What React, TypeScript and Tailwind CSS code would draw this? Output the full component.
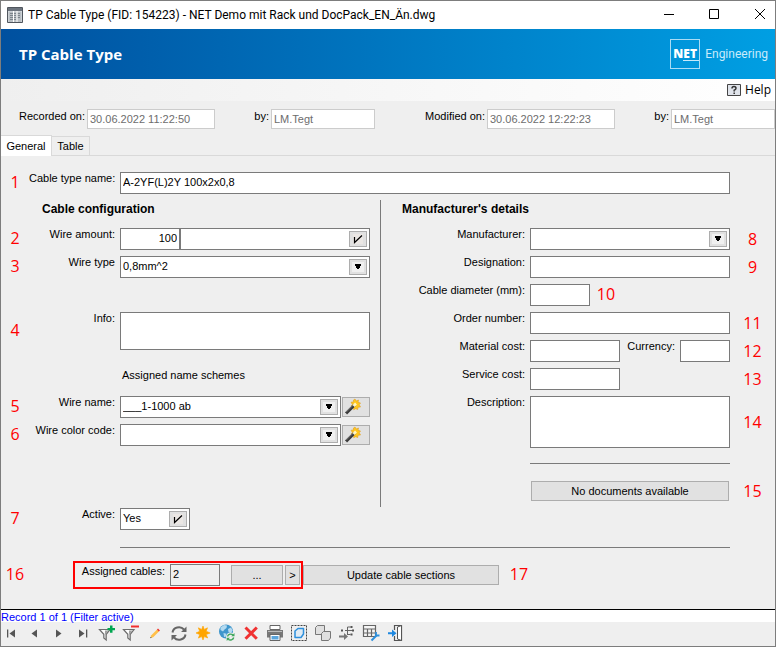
import React, { useState } from "react";

const fieldBox = "border border-[#7a7a7a] bg-white";
const fieldText = "px-0.5 pb-0.5 text-[11px] leading-4 outline-none";
const greyButton = "border border-[#adadad] bg-[#e1e1e1] text-[11px] text-black hover:bg-[#e5f1fb]";

type NumProps = { n: number; side?: "left" | "right" };

function Num({ n, side = "left" }: NumProps) {
  return (
    <span
      className={
        side === "left"
          ? "w-7 shrink-0 self-center pb-0.5 text-center text-base leading-5 text-[#ff0000] font-['Open_Sans',sans-serif]"
          : "w-[45px] shrink-0 self-center text-center text-base leading-5 text-[#ff0000] font-['Open_Sans',sans-serif]"
      }
    >
      {n}
    </span>
  );
}

// label on the left half, ends right before the field
function LeftLabel({ id, children }: { id: string; children: React.ReactNode }) {
  return (
    <label htmlFor={id} className="mr-[5px] w-[86px] shrink-0 text-right leading-3 whitespace-nowrap">
      {children}
    </label>
  );
}

function RightLabel({ id, children }: { id: string; children: React.ReactNode }) {
  return (
    <label htmlFor={id} className="mr-[5px] w-36 shrink-0 text-right leading-3 whitespace-nowrap">
      {children}
    </label>
  );
}

function ArrowSelect({ id, value }: { id: string; value: string }) {
  return (
    <div className="relative min-w-0 flex-1">
      <select id={id} defaultValue={value} className={`h-[22px] w-full appearance-none ${fieldBox} ${fieldText}`}>
        <option>{value}</option>
      </select>
      <span className="pointer-events-none absolute top-[3px] right-[3px] flex h-4 w-[18px] items-center justify-center border border-[#adadad] bg-[#e1e1e1]">
        <svg width="12" height="10" viewBox="0 0 12 10" shapeRendering="crispEdges">
          <path d="M0 0h12v10H0z" fill="#f0f0f0" />
          <path d="M3 2h6v2H8v2H7v1H5V6H4V4H3z" fill="#000" />
        </svg>
      </span>
    </div>
  );
}

function TickButton({ label }: { label: string }) {
  return (
    <button type="button" aria-label={label} className={`mr-0.5 flex h-4 w-[18px] shrink-0 items-center justify-center ${greyButton}`}>
      <svg width="10" height="10" viewBox="0 0 10 10">
        <path d="M0 0h10v10H0z" fill="#ebe7e4" />
        <path d="M1.5 3v5.5L9 1.500" fill="none" stroke="#000" strokeWidth="1.200" />
      </svg>
    </button>
  );
}

function WandButton({ label }: { label: string }) {
  return (
    <button type="button" aria-label={label} className={`ml-px h-5 w-7 shrink-0 self-center ${greyButton}`}>
      <svg width="20" height="18" viewBox="0 0 20 18">
        <path
          d="M12 1l1.2 2L15.500 2l-.5 2.300L17.500 5l-1.300 1.700L17.500 9l-2.500.2-.3 2.300-2-.8-2 1-.2-2.200L8 8l1.400-1.600L8 4.200l2.300-.1L10.500 2z"
          fill="#ffc61e"
          stroke="#e0a020"
          strokeWidth=".6"
        />
        <path d="M3 15.500L11.500 7" stroke="#3a3a3a" strokeWidth="3" />
        <path d="M3 14.300L10.500 6.800" stroke="#8a8a8a" strokeWidth=".8" />
        <path d="M10.500 8L13 5.500" stroke="#fff6c8" strokeWidth="2.600" />
        <path d="M2 16.500l1-1" stroke="#ddd" strokeWidth="1.500" />
      </svg>
    </button>
  );
}

const funnel = (
  <>
    <path d="M2.500 7.500H13L9.200 12.300V18L6.800 16V12.300z" fill="#fff" stroke="#6d6d6d" strokeWidth="1.200" />
    <path d="M8 8.500h3.500L8.500 12.500v4l-.8-.6z" fill="#a0a0a0" />
  </>
);

const toolbar: { name: string; icon: React.ReactNode }[] = [
  { name: "First record", icon: <path d="M6 7.500h1.300v8H6zM14 7.500v8l-5.500-4z" fill="#555" /> },
  { name: "Previous record", icon: <path d="M12 7.500v8l-5.500-4z" fill="#555" /> },
  { name: "Next record", icon: <path d="M7 7.500v8l5.500-4z" fill="#555" /> },
  { name: "Last record", icon: <path d="M6 7.500v8l5.500-4zM13 7.500h1.300v8H13z" fill="#555" /> },
  {
    name: "Set filter",
    icon: (
      <>
        {funnel}
        <path d="M13 3.500h2.500V6H18v2.300h-2.500v2.500H13V8.300h-2.500V6H13z" fill="#00a651" />
      </>
    ),
  },
  {
    name: "Remove filter",
    icon: (
      <>
        {funnel}
        <path d="M10 3.500h8v2h-8z" fill="#f03030" />
      </>
    ),
  },
  {
    name: "Edit",
    icon: (
      <>
        <path d="M5.500 16l.8-2.700 6-6 1.900 1.900-6 6z" fill="#ffc04a" />
        <path d="M12 7.500l1-1 1.900 1.900-1 1z" fill="#f03030" />
        <path d="M5.200 16.300l.5-1.500 1 1z" fill="#444" />
      </>
    ),
  },
  {
    name: "Refresh",
    icon: (
      <>
        <path d="M3.500 10.500a6.500 6 0 0 1 11.500-3M16.500 12.500a6.500 6 0 0 1-11.500 3" fill="none" stroke="#666" strokeWidth="2" />
        <path d="M17.500 4.500v5.500h-5.500zM2.500 18.500V13H8z" fill="#666" />
      </>
    ),
  },
  {
    name: "New",
    icon: (
      <path
        d="M10 4l1.200 3.400L14.500 5.800l-1.300 3.400 4 1.800-4 1.500 1.500 3.500-3.500-1.400L10 18l-1.300-3.400-3.300 1.500 1.300-3.500L3 11l3.700-1.700-1.400-3.500 3.400 1.600z"
        fill="#ffa500"
        stroke="#ffa500"
        strokeWidth=".6"
      />
    ),
  },
  {
    name: "Update online",
    icon: (
      <>
        <circle cx="9" cy="9.500" r="7" fill="#3f96cc" />
        <path d="M3.500 5.500L7 3l3 .5L9.500 6 7.500 7.500 6 9.500 3.500 8zM11 7l3-1.500 1.700 3L14 11l-2.500-1zM6.500 11l3 .8-.8 3L7 15z" fill="#b4daf0" />
        <circle cx="13.500" cy="15" r="4.500" fill="#efefef" />
        <path d="M10.500 14.500a3.300 3 0 0 1 5.500-1.500M16.700 15.500a3.300 3 0 0 1-5.500 1.700" fill="none" stroke="#3fa75c" strokeWidth="1.400" />
        <path d="M17.500 11v3.300h-3.300zM9.700 19v-3.300H13z" fill="#3fa75c" />
      </>
    ),
  },
  { name: "Delete", icon: <path d="M4.500 5.500l11.300 11.300M15.800 5.500L4.500 16.800" stroke="#f03232" strokeWidth="3" /> },
  {
    name: "Print",
    icon: (
      <>
        <path d="M5 3.500h10v4H5z" fill="#fff" stroke="#666" />
        <path d="M2 8h16v7.500h-3v-3H5v3H2z" fill="#777" />
        <path d="M5 12.500h10v6H5z" fill="#fff" stroke="#666" />
        <path d="M6.500 14h7v3.500h-7z" fill="#5aa5dc" />
        <path d="M3 9.500h14" stroke="#bbb" />
      </>
    ),
  },
  {
    name: "Select object",
    icon: (
      <>
        <path d="M2.500 3.500h15v15h-15z" fill="none" stroke="#444" strokeDasharray="2 1" />
        <path d="M6 9l3-2.500h5.500V12L12 15.500H6z" fill="#dfeaf3" stroke="#2d8fdc" strokeWidth="1.500" strokeLinejoin="round" />
      </>
    ),
  },
  {
    name: "Copy",
    icon: (
      <>
        <path d="M2.500 5.500l2-2h7v6l-2 3h-7z" fill="#e0e0e0" stroke="#777" strokeLinejoin="round" />
        <path d="M8.500 11.500l2-2h7v6.500l-2 2.500h-7z" fill="#e0e0e0" stroke="#777" strokeLinejoin="round" />
      </>
    ),
  },
  {
    name: "Assign",
    icon: (
      <>
        <path d="M2 13.500h5V11l4 3.500-4 3.500v-2.500H2z" fill="#777" />
        <path d="M10.500 5v8M8 8.500h8M10.500 5h3M10.500 12.500h3" fill="none" stroke="#666" />
        <path d="M4 7.500h2v2H4zM13.500 4h2v2h-2zM15 7.500h2v2h-2zM13.500 11.500h2v2h-2z" fill="#555" />
      </>
    ),
  },
  {
    name: "Table settings",
    icon: (
      <>
        <path d="M2.500 3.500h12v11h-12zM2.500 7h12M2.500 11h12M6.500 7v7.500M10.500 7v7.500" fill="#f6f6f6" stroke="#666" strokeWidth="1.200" />
        <path d="M10.500 18.500l5-5" stroke="#2d8fdc" strokeWidth="2" />
        <path d="M15 10v3.500h3.500" fill="none" stroke="#2d8fdc" strokeWidth="1.800" />
      </>
    ),
  },
  {
    name: "Close form",
    icon: (
      <>
        <path d="M9.500 8V3.500h7v15h-7V14" fill="none" stroke="#555" strokeWidth="1.200" />
        <path d="M12.500 5l4-1.500v15l-4-1.500z" fill="#fff" stroke="#555" />
        <path d="M3 10.200h4V7.500l4.500 3.700L7 15v-2.700H3z" fill="#1e88e0" />
      </>
    ),
  },
];

function TitleBar() {
  return (
    <div className="flex h-7 items-center bg-white pl-[5px]">
      <svg width="18" height="18" viewBox="0 0 18 18" className="shrink-0">
        <path d="M1.500 1.500h15v15h-15z" fill="#dfe3e6" stroke="#50565e" />
        <path d="M2 2h14v3H2z" fill="#6c747e" />
        <path d="M2.500 5.500h13v10.500h-13z" fill="#b9bfc4" />
        <path d="M4 7.500h3M4 9.500h3M4 11.500h3M4 13.500h3M8 7.500h2M8 9.500h2M8 11.500h2M8 13.500h2M11.500 7.500H14M11.500 9.500H14M11.500 11.500H14" stroke="#7d858c" />
        <path d="M7.500 5v11M11 5v11" stroke="#fff" />
      </svg>
      <span className="ml-1 min-w-0 flex-1 truncate text-xs text-black font-[Roboto,sans-serif]">
        TP Cable Type (FID: 154223) - NET Demo mit Rack und DocPack_EN_Än.dwg
      </span>
      <div className="flex shrink-0">
        <button type="button" aria-label="Minimize" className="flex h-7 w-[45px] items-center justify-center">
          <svg width="12" height="12" viewBox="0 0 12 12">
            <path d="M1 5.500h10" stroke="#000" />
          </svg>
        </button>
        <button type="button" aria-label="Maximize" className="flex h-7 w-[45px] items-center justify-center">
          <svg width="12" height="12" viewBox="0 0 12 12">
            <path d="M1.500.5h9v9h-9z" fill="none" stroke="#000" />
          </svg>
        </button>
        <button type="button" aria-label="Close" className="flex h-7 w-[39px] items-center justify-center pl-2">
          <svg width="12" height="12" viewBox="0 0 12 12">
            <path d="M1 0l10 10M11 0L1 10" stroke="#000" />
          </svg>
        </button>
      </div>
    </div>
  );
}

function Banner() {
  return (
    <header className="flex h-[50px] items-center justify-between bg-linear-to-r from-[#00509f] to-[#009fe3] pr-[7px] pl-[18px] text-white">
      <h1 className="text-[15px] font-bold font-['Open_Sans',sans-serif]">TP Cable Type</h1>
      <div className="flex items-center gap-[5px]">
        <div className="h-[30px] w-[30px] border border-[#a9dcf5] pt-2 text-center font-['Open_Sans',sans-serif]">
          <div className="text-xs leading-3 font-extrabold">NET</div>
          <div className="ml-3 h-px bg-[#c9e9fa]" />
        </div>
        <span className="text-xs text-[#c9ebfb] font-[Roboto,sans-serif]">Engineering</span>
      </div>
    </header>
  );
}

const stamps = [
  { id: "recorded", label: "Recorded on:", date: "30.06.2022 11:22:50" },
  { id: "modified", label: "Modified on:", date: "30.06.2022 12:22:23" },
];

function Stamps() {
  const box = "h-5 min-w-0 border border-[#cccccc] bg-white px-0.5 text-[#6d6d6d] outline-none";
  return (
    <div className="grid grid-cols-[minmax(0,200fr)_minmax(0,187fr)] pt-2">
      {stamps.map((s) => (
        <div key={s.id} className="flex gap-0.5 first:pr-[26px]">
          <label htmlFor={s.id} className="w-[84px] shrink-0 text-right leading-3.5 whitespace-nowrap">
            {s.label}
          </label>
          <input id={s.id} readOnly value={s.date} className={`w-32 ${box}`} />
          <label htmlFor={`${s.id}-by`} className="w-[52px] shrink-0 text-right leading-3.5">
            by:
          </label>
          <input id={`${s.id}-by`} readOnly value="LM.Tegt" className={`flex-1 ${box}`} />
        </div>
      ))}
    </div>
  );
}

function CableConfiguration() {
  return (
    <section className="flex flex-col border-r border-[#7a7a7a] pr-2.5">
      <h2 className="h-7 pt-[3px] pl-[41px] text-xs leading-3 font-bold">Cable configuration</h2>
      <div className="flex flex-col gap-1.5">
        <div className="flex">
          <Num n={2} />
          <LeftLabel id="amount">Wire amount:</LeftLabel>
          <input id="amount" defaultValue="100" className={`h-[22px] w-[60px] text-right ${fieldBox} ${fieldText}`} />
          <div className={`flex h-[22px] min-w-0 flex-1 items-center ${fieldBox}`}>
            <input aria-label="Wire amount note" className={`min-w-0 flex-1 ${fieldText}`} />
            <TickButton label="Confirm wire amount" />
          </div>
        </div>
        <div className="flex">
          <Num n={3} />
          <LeftLabel id="wiretype">Wire type</LeftLabel>
          <ArrowSelect id="wiretype" value="0,8mm^2" />
        </div>
      </div>
      <div className="flex pt-[34px]">
        <Num n={4} />
        <LeftLabel id="info">Info:</LeftLabel>
        <textarea id="info" className={`h-[38px] min-w-0 flex-1 resize-none ${fieldBox} ${fieldText}`} />
      </div>
      <h3 className="h-[46px] pt-[17px] pl-[121px] leading-4">Assigned name schemes</h3>
      <div className="flex flex-col gap-1.5">
        <div className="flex">
          <Num n={5} />
          <LeftLabel id="wirename">Wire name:</LeftLabel>
          <ArrowSelect id="wirename" value="___1-1000 ab" />
          <WandButton label="Wire name wizard" />
        </div>
        <div className="flex">
          <Num n={6} />
          <LeftLabel id="wirecolor">Wire color code:</LeftLabel>
          <ArrowSelect id="wirecolor" value="" />
          <WandButton label="Wire color wizard" />
        </div>
      </div>
    </section>
  );
}

function ManufacturerDetails() {
  return (
    <section className="flex flex-col">
      <h2 className="h-7 pt-[3px] pl-[21px] text-xs leading-3 font-bold">Manufacturer's details</h2>
      <div className="flex flex-col gap-1.5">
        <div className="flex">
          <RightLabel id="manufacturer">Manufacturer:</RightLabel>
          <ArrowSelect id="manufacturer" value="" />
          <Num n={8} side="right" />
        </div>
        <div className="flex">
          <RightLabel id="designation">Designation:</RightLabel>
          <input id="designation" className={`h-[22px] min-w-0 flex-1 ${fieldBox} ${fieldText}`} />
          <Num n={9} side="right" />
        </div>
        <div className="flex">
          <RightLabel id="diameter">Cable diameter (mm):</RightLabel>
          <input id="diameter" className={`mr-0.5 h-[22px] w-[60px] ${fieldBox} ${fieldText}`} />
          <Num n={10} />
        </div>
        <div className="flex">
          <RightLabel id="order">Order number:</RightLabel>
          <input id="order" className={`h-[22px] min-w-0 flex-1 ${fieldBox} ${fieldText}`} />
          <Num n={11} side="right" />
        </div>
        <div className="flex">
          <RightLabel id="material">Material cost:</RightLabel>
          <input id="material" className={`h-[22px] min-w-0 flex-1 ${fieldBox} ${fieldText}`} />
          <label htmlFor="currency" className="w-[60px] shrink-0 pr-[5px] text-right leading-3">
            Currency:
          </label>
          <input id="currency" className={`h-[22px] w-[50px] ${fieldBox} ${fieldText}`} />
          <Num n={12} side="right" />
        </div>
        <div className="flex">
          <RightLabel id="service">Service cost:</RightLabel>
          <input id="service" className={`mr-[110px] h-[22px] min-w-0 flex-1 ${fieldBox} ${fieldText}`} />
          <Num n={13} side="right" />
        </div>
        <div className="flex">
          <RightLabel id="description">Description:</RightLabel>
          <textarea id="description" className={`h-[52px] min-w-0 flex-1 resize-none ${fieldBox} ${fieldText}`} />
          <Num n={14} side="right" />
        </div>
      </div>
      <hr className="mt-[15px] mr-[45px] ml-[149px] border-[#7a7a7a]" />
      <div className="mt-[17px] mb-[6px] flex pl-[149px]">
        <button type="button" className={`mx-px h-5 min-w-0 flex-1 ${greyButton}`}>
          No documents available
        </button>
        <Num n={15} side="right" />
      </div>
    </section>
  );
}

export default function App() {
  const [tab, setTab] = useState("General");

  return (
    <div className="flex min-h-screen flex-col border border-[#7d7d7d] bg-[#efefef] text-[11px] text-black font-['Liberation_Sans',Arial,sans-serif]">
      <TitleBar />
      <Banner />
      <div className="flex h-[22px] items-center justify-end bg-linear-to-r from-[#efefef] to-white pr-1">
        <button type="button" className="flex items-center gap-1 text-xs font-['Open_Sans',sans-serif]">
          <svg width="14" height="14" viewBox="0 0 14 14">
            <path d="M.5 1.500h13v11H.5z" fill="#dfe3ea" stroke="#444" />
            <path d="M5 5.500Q5 3.500 7 3.500T9 5.300Q9 6.500 7.200 7.200V8.500M7.200 9.500V11" fill="none" stroke="#333" strokeWidth="1.500" />
          </svg>
          Help
        </button>
      </div>
      <Stamps />

      <div role="tablist" className="mt-1.5 flex items-end border-b border-[#d9d9d9]">
        {["General", "Table"].map((t) => (
          <button
            key={t}
            type="button"
            role="tab"
            aria-selected={tab === t}
            onClick={() => setTab(t)}
            className={
              tab === t
                ? "-mb-px h-[21px] w-[51px] border-t border-r border-[#d9d9d9] bg-white"
                : "h-[19px] w-[38px] border-t border-r border-[#d9d9d9]"
            }
          >
            {t}
          </button>
        ))}
      </div>

      <main className="flex-1 pt-4 pb-5">
        <div className="flex">
          <Num n={1} />
          <LeftLabel id="typename">Cable type name:</LeftLabel>
          <input
            id="typename"
            defaultValue="A-2YF(L)2Y 100x2x0,8"
            className={`mr-[45px] h-[22px] min-w-0 flex-1 ${fieldBox} ${fieldText}`}
          />
        </div>
        <div className="mt-1.5 grid grid-cols-[minmax(0,380fr)_minmax(0,394fr)]">
          <CableConfiguration />
          <ManufacturerDetails />
        </div>
        <div className="mt-px flex">
          <Num n={7} />
          <LeftLabel id="active">Active:</LeftLabel>
          <div className={`flex h-[22px] w-[70px] items-center ${fieldBox}`}>
            <input id="active" defaultValue="Yes" className={`min-w-0 flex-1 ${fieldText}`} />
            <TickButton label="Toggle active" />
          </div>
        </div>
        <hr className="mt-[17px] mr-[45px] ml-[119px] border-[#7a7a7a]" />
        <div className="mt-[13px] flex items-center">
          <Num n={16} />
          <div className="ml-11 flex h-7 items-center border-2 border-[#ff0000] pr-px pl-[5px]">
            <label htmlFor="assigned" className="mr-[5px] w-[85px] self-start pt-0.5 text-right leading-3 whitespace-nowrap">
              Assigned cables:
            </label>
            <input id="assigned" readOnly value="2" className={`h-[22px] w-[50px] border border-[#7a7a7a] bg-[#efefef] ${fieldText}`} />
            <button type="button" className={`ml-[11px] h-5 w-[52px] ${greyButton}`}>
              ...
            </button>
            <button type="button" className={`ml-0.5 h-5 w-[15px] ${greyButton}`}>
              &gt;
            </button>
          </div>
          <button type="button" className={`mr-1.5 h-5 w-[196px] ${greyButton}`}>
            Update cable sections
          </button>
          <Num n={17} />
        </div>
      </main>

      <footer>
        <div className="h-[13px] border-t border-black bg-white leading-3 text-[#0000ff]">
          <p className="pt-px">Record 1 of 1 (Filter active)</p>
        </div>
        <div role="toolbar" className="flex flex-wrap">
          {toolbar.map((item) => (
            <button key={item.name} type="button" aria-label={item.name} className="h-6 w-6 hover:bg-[#dcebf7]">
              <svg width="24" height="24" viewBox="0 0 24 24">
                {item.icon}
              </svg>
            </button>
          ))}
        </div>
      </footer>
    </div>
  );
}
